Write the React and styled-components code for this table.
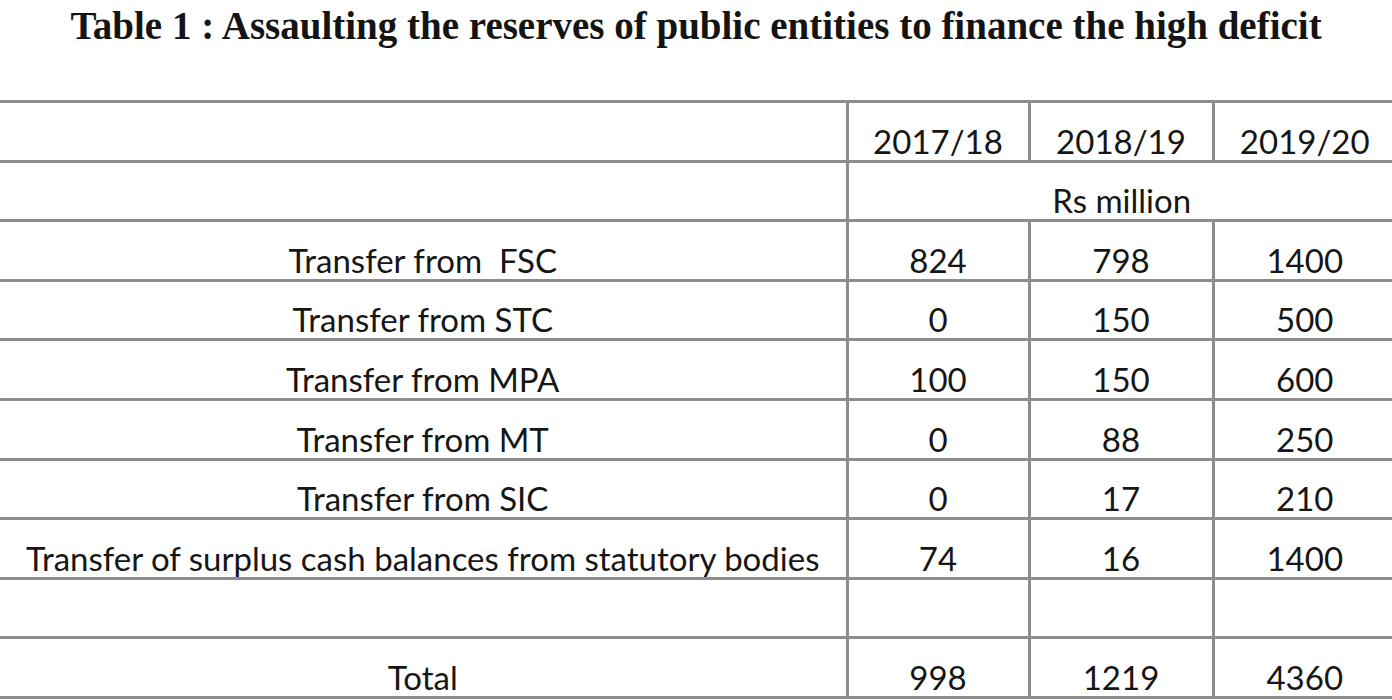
import React from "react";
import styled, { createGlobalStyle } from "styled-components";

const GlobalStyle = createGlobalStyle`
  html, body { margin: 0; padding: 0; background: #ffffff; }
  #root { width: 1392px; height: 700px; }
`;

const Page = styled.div`
  width: 1392px;
  height: 700px;
  overflow: hidden;
  background: #ffffff;
`;

const Title = styled.h1`
  margin: 0;
  height: 100px;
  box-sizing: border-box;
  padding-top: 6px;
  font-family: "Liberation Serif", "Times New Roman", serif;
  font-weight: 700;
  font-size: 39px;
  line-height: 1;
  color: #141414;
  text-align: center;
  white-space: nowrap;
`;

const Table = styled.table`
  border-collapse: collapse;
  table-layout: fixed;
  width: 1395px;
  font-family: Lato, "Liberation Sans", sans-serif;
  font-size: 33px;
  color: #161616;
`;

const Row = styled.tr`
  height: 59.6px;
`;

const Cell = styled.td`
  border: 3px solid #8d8d8d;
  border-left: ${(p) => (p.$first ? "none" : "3px solid #8d8d8d")};
  border-right: ${(p) => (p.$last ? "none" : "3px solid #8d8d8d")};
  padding: 0 0 2px 0;
  line-height: 1;
  text-align: center;
  vertical-align: bottom;
  white-space: nowrap;
`;

const years = ["2017/18", "2018/19", "2019/20"];

const rows = [
  ["Transfer from\u00a0 FSC", "824", "798", "1400"],
  ["Transfer from STC", "0", "150", "500"],
  ["Transfer from MPA", "100", "150", "600"],
  ["Transfer from MT", "0", "88", "250"],
  ["Transfer from SIC", "0", "17", "210"],
  ["Transfer of surplus cash balances from statutory bodies", "74", "16", "1400"],
  ["", "", "", ""],
  ["Total", "998", "1219", "4360"],
];

export default function App() {
  return (
    <Page>
      <GlobalStyle />
      <Title>Table 1 : Assaulting the reserves of public entities to finance the high deficit</Title>
      <Table>
        <colgroup>
          <col style={{ width: 847 }} />
          <col style={{ width: 182 }} />
          <col style={{ width: 184 }} />
          <col style={{ width: 182 }} />
        </colgroup>
        <tbody>
          <Row>
            <Cell $first />
            {years.map((y, i) => (
              <Cell key={y} $last={i === 2}>{y}</Cell>
            ))}
          </Row>
          <Row>
            <Cell $first />
            <Cell colSpan={3} $last>Rs million</Cell>
          </Row>
          {rows.map((r, ri) => (
            <Row key={ri}>
              {r.map((c, ci) => (
                <Cell key={ci} $first={ci === 0} $last={ci === 3}>{c}</Cell>
              ))}
            </Row>
          ))}
        </tbody>
      </Table>
    </Page>
  );
}
